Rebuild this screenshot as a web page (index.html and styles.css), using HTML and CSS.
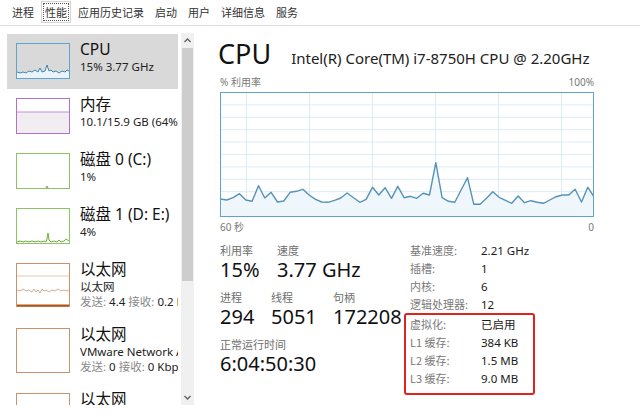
FILE: index.html
```html
<!DOCTYPE html>
<html lang="zh-CN">
<head>
<meta charset="utf-8">
<title>任务管理器 - 性能</title>
<link rel="stylesheet" href="styles.css">
</head>
<body>
<nav class="tabs">
  <span class="tab">进程</span>
  <span class="tab active"><span class="focus">性能</span></span>
  <span class="tab">应用历史记录</span>
  <span class="tab">启动</span>
  <span class="tab">用户</span>
  <span class="tab">详细信息</span>
  <span class="tab">服务</span>
</nav>
<div class="main">
  <aside class="side">
    <ul class="list">
      <li class="item selected">
        <svg class="thumb" width="54" height="36" viewBox="0 0 54 36">
          <polygon class="cpu-fill" points="1,29 4,30 7,29 10,30 13,28 16,29 19,27 22,29 24,25 26,29 29,28 31,22 33,28 35,27 37,29 40,28 43,30 46,28 49,29 51,27 53,28 53,35 1,35"/>
          <polyline class="cpu-line" points="1,29 4,30 7,29 10,30 13,28 16,29 19,27 22,29 24,25 26,29 29,28 31,22 33,28 35,27 37,29 40,28 43,30 46,28 49,29 51,27 53,28"/>
          <rect class="b-cpu" x="0.5" y="0.5" width="53" height="35"/>
        </svg>
        <div class="info">
          <div class="name">CPU</div>
          <div class="sub">15% 3.77 GHz</div>
        </div>
      </li>
      <li class="item">
        <svg class="thumb" width="54" height="36" viewBox="0 0 54 36">
          <rect class="mem-fill" x="1" y="14" width="52" height="21"/>
          <line class="mem-line" x1="1" y1="14" x2="53" y2="14"/>
          <rect class="b-mem" x="0.5" y="0.5" width="53" height="35"/>
        </svg>
        <div class="info">
          <div class="name">内存</div>
          <div class="sub">10.1/15.9 GB (64%)</div>
        </div>
      </li>
      <li class="item">
        <svg class="thumb" width="54" height="36" viewBox="0 0 54 36">
          <polyline class="disk-line" points="30,35 31,33 32,35"/>
          <rect class="b-disk" x="0.5" y="0.5" width="53" height="35"/>
        </svg>
        <div class="info">
          <div class="name">磁盘 0 (C:)</div>
          <div class="sub">1%</div>
        </div>
      </li>
      <li class="item">
        <svg class="thumb" width="54" height="36" viewBox="0 0 54 36">
          <polyline class="disk-line" points="1,34 4,33 7,34 10,33 13,34 16,33 19,34 22,33 25,34 28,33 30,34 31,31 32,25 33,32 35,34 38,33 41,34 43,32 45,34 48,33 50,31 53,33"/>
          <rect class="b-disk" x="0.5" y="0.5" width="53" height="35"/>
        </svg>
        <div class="info">
          <div class="name">磁盘 1 (D: E:)</div>
          <div class="sub">4%</div>
        </div>
      </li>
      <li class="item tall">
        <svg class="thumb" width="54" height="44" viewBox="0 0 54 44">
          <line class="eth-scale" x1="1" y1="13" x2="53" y2="13"/>
          <polyline class="eth-line" points="1,27 4,28 7,26 10,28 13,27 16,29 18,26 20,29 22,27 24,30 26,26 28,28 30,27 33,29 36,27 39,28 42,26 45,28 48,27 51,28 53,27"/>
          <rect class="b-eth" x="0.5" y="0.5" width="53" height="43"/>
          <line class="eth-base" x1="1" y1="42.5" x2="53" y2="42.5"/>
        </svg>
        <div class="info">
          <div class="name">以太网</div>
          <div class="sub">以太网</div>
          <div class="sub"><span class="k">发送:</span> 4.4 <span class="k">接收:</span> 0.2 Kbps</div>
        </div>
      </li>
      <li class="item tall">
        <svg class="thumb" width="54" height="45" viewBox="0 0 54 45">
          <rect class="b-eth" x="0.5" y="0.5" width="53" height="44"/>
        </svg>
        <div class="info">
          <div class="name">以太网</div>
          <div class="sub">VMware Network Adapter VMnet1</div>
          <div class="sub"><span class="k">发送:</span> 0 <span class="k">接收:</span> 0 Kbps</div>
        </div>
      </li>
      <li class="item tall">
        <svg class="thumb" width="54" height="45" viewBox="0 0 54 45">
          <rect class="b-eth" x="0.5" y="0.5" width="53" height="44"/>
        </svg>
        <div class="info">
          <div class="name">以太网</div>
          <div class="sub">VMware Network Adapter VMnet8</div>
          <div class="sub"><span class="k">发送:</span> 0 <span class="k">接收:</span> 0 Kbps</div>
        </div>
      </li>
    </ul>
    <div class="scrollbar">
      <svg class="arrow" width="13" height="14" viewBox="0 0 13 14"><polyline points="3.5,9 6.5,6 9.5,9"/></svg>
      <div class="thumb-bar"></div>
      <div class="track"></div>
      <svg class="arrow" width="13" height="14" viewBox="0 0 13 14"><polyline points="3.5,5 6.5,8 9.5,5"/></svg>
    </div>
  </aside>

  <section class="detail">
    <header class="head">
      <h1 class="title">CPU</h1>
      <span class="model">Intel(R) Core(TM) i7-8750H CPU @ 2.20GHz</span>
    </header>
    <div class="axis top"><span>% 利用率</span><span>100%</span></div>
    <svg class="chart" width="374" height="125" viewBox="0 0 374 125">
      <g class="grid">
        <line x1="26.5" y1="0" x2="26.5" y2="125"/>
        <line x1="89.5" y1="0" x2="89.5" y2="125"/>
        <line x1="152.5" y1="0" x2="152.5" y2="125"/>
        <line x1="215.5" y1="0" x2="215.5" y2="125"/>
        <line x1="278.5" y1="0" x2="278.5" y2="125"/>
        <line x1="341.5" y1="0" x2="341.5" y2="125"/>
        <line x1="0" y1="12.9" x2="374" y2="12.9"/>
        <line x1="0" y1="25.3" x2="374" y2="25.3"/>
        <line x1="0" y1="37.7" x2="374" y2="37.7"/>
        <line x1="0" y1="50.1" x2="374" y2="50.1"/>
        <line x1="0" y1="62.5" x2="374" y2="62.5"/>
        <line x1="0" y1="74.9" x2="374" y2="74.9"/>
        <line x1="0" y1="87.3" x2="374" y2="87.3"/>
        <line x1="0" y1="99.7" x2="374" y2="99.7"/>
        <line x1="0" y1="112.1" x2="374" y2="112.1"/>
      </g>
      <polygon class="usage-fill" points="0.5,107 6.8,108 13.1,105.7 19.5,101.7 25.8,108 32.1,109.3 38.5,93.7 44.8,106 51.1,100.3 57.5,110 63.8,109 70.1,100.3 76.5,99.3 82.8,97.3 89.1,103 95.5,107.3 101.8,110 108.1,110.3 114.5,108.3 120.8,106 127.1,101 133.5,105.7 139.8,110.3 146.1,107.3 152.5,95.3 158.8,103 165.1,95.7 171.5,106.3 177.8,94.3 184.1,105.7 190.5,104.3 196.8,106.3 203.1,101.3 209.5,103 215.8,70.7 222.1,105.7 228.5,109.3 234.8,110.3 241.1,98 247.5,85.7 253.8,112.3 260.1,112.3 266.5,106.3 272.8,99.7 279.1,105.3 285.5,108.3 291.8,111.3 298.1,104 304.5,110.7 310.8,108.7 317.1,110.3 323.5,111.3 329.8,108 336.1,104.7 342.5,103 348.8,103 355.1,97.3 361.5,110 367.8,95.3 373.5,104 373.5,124.5 0.5,124.5"/>
      <polyline class="usage-line" points="0.5,107 6.8,108 13.1,105.7 19.5,101.7 25.8,108 32.1,109.3 38.5,93.7 44.8,106 51.1,100.3 57.5,110 63.8,109 70.1,100.3 76.5,99.3 82.8,97.3 89.1,103 95.5,107.3 101.8,110 108.1,110.3 114.5,108.3 120.8,106 127.1,101 133.5,105.7 139.8,110.3 146.1,107.3 152.5,95.3 158.8,103 165.1,95.7 171.5,106.3 177.8,94.3 184.1,105.7 190.5,104.3 196.8,106.3 203.1,101.3 209.5,103 215.8,70.7 222.1,105.7 228.5,109.3 234.8,110.3 241.1,98 247.5,85.7 253.8,112.3 260.1,112.3 266.5,106.3 272.8,99.7 279.1,105.3 285.5,108.3 291.8,111.3 298.1,104 304.5,110.7 310.8,108.7 317.1,110.3 323.5,111.3 329.8,108 336.1,104.7 342.5,103 348.8,103 355.1,97.3 361.5,110 367.8,95.3 373.5,104"/>
      <rect class="frame" x="0.5" y="0.5" width="373" height="124"/>
    </svg>
    <div class="axis bottom"><span>60 秒</span><span>0</span></div>

    <div class="stats">
      <div class="live">
        <div class="row">
          <div class="stat w57"><div class="label">利用率</div><div class="value">15%</div></div>
          <div class="stat"><div class="label">速度</div><div class="value">3.77 GHz</div></div>
        </div>
        <div class="row">
          <div class="stat w51"><div class="label">进程</div><div class="value">294</div></div>
          <div class="stat w62"><div class="label">线程</div><div class="value">5051</div></div>
          <div class="stat"><div class="label">句柄</div><div class="value">172208</div></div>
        </div>
        <div class="row">
          <div class="stat"><div class="label">正常运行时间</div><div class="value">6:04:50:30</div></div>
        </div>
      </div>
      <div class="specs">
        <dl class="spec-list">
          <dt>基准速度:</dt><dd>2.21 GHz</dd>
          <dt>插槽:</dt><dd>1</dd>
          <dt>内核:</dt><dd>6</dd>
          <dt>逻辑处理器:</dt><dd>12</dd>
        </dl>
        <dl class="spec-list boxed">
          <dt>虚拟化:</dt><dd>已启用</dd>
          <dt>L1 缓存:</dt><dd>384 KB</dd>
          <dt>L2 缓存:</dt><dd>1.5 MB</dd>
          <dt>L3 缓存:</dt><dd>9.0 MB</dd>
        </dl>
      </div>
    </div>
  </section>
</div>
</body>
</html>
```

FILE: styles.css
```css
* { box-sizing: border-box; }

html, body {
  margin: 0;
  padding: 0;
  background: #ffffff;
}

body {
  width: 640px;
  height: 417px;
  overflow: hidden;
  font-family: "Segoe UI", "Noto Sans", "Noto Sans CJK SC", sans-serif;
  color: #1a1a1a;
}

/* ---------- tabs ---------- */
.tabs {
  display: flex;
  align-items: stretch;
  gap: 3px;
  height: 26px;
  padding: 1px 0 0 8px;
  border-bottom: 1px solid #dadada;
  font-family: "Noto Sans CJK SC", sans-serif;
  font-size: 11px;
  color: #333;
}

.tab {
  display: flex;
  align-items: center;
  height: 22px;
  padding: 0 3px;
  border: 1px solid transparent;
}

.tab.active {
  background: #fff;
  border-color: #d6d6d6;
  padding: 1px;
}

.tab .focus {
  display: flex;
  align-items: center;
  height: 100%;
  padding: 0 1px;
  border: 1px dotted #555;
}

/* ---------- sidebar ---------- */
.main {
  display: flex;
  align-items: flex-start;
  height: 391px;
}

.side {
  display: flex;
  width: 195px;
  height: 379px;
  flex: none;
  overflow: hidden;
}

.list {
  list-style: none;
  margin: 0;
  padding: 8px 0 0 7px;
  width: 181px;
}

.item {
  display: flex;
  width: 171px;
  padding: 9px 0 10px 9px;
  overflow: hidden;
  white-space: nowrap;
}

.item.selected {
  background: #d9d9d9;
}

.thumb {
  flex: none;
  margin-right: 10px;
  display: block;
}

.info {
  margin-top: -5px;
  min-width: 0;
  overflow: hidden;
}

.name {
  font-size: 15.5px;
  line-height: 22px;
  color: #111;
}

.sub {
  font-size: 11.5px;
  line-height: 14.5px;
  color: #222;
}

.sub .k { color: #8a8a8a; }

.b-cpu, .b-mem, .b-disk, .b-eth { fill: none; stroke-width: 1; }
.b-cpu { stroke: #5ea6cf; }
.b-mem { stroke: #b56fcf; }
.b-disk { stroke: #8bc463; }
.b-eth { stroke: #c8936a; }

.cpu-fill { fill: #e9f3f9; }
.cpu-line { fill: none; stroke: #3f88b6; stroke-width: 1; }
.mem-fill { fill: #f1eef2; }
.mem-line { stroke: #c48ed8; stroke-width: 1; }
.disk-line { fill: none; stroke: #6fae3d; stroke-width: 1; }
.eth-scale { stroke: #e4c8b0; stroke-width: 1; }
.eth-line { fill: none; stroke: #c79b7d; stroke-width: 0.8; }
.eth-base { stroke: #b0561a; stroke-width: 2; }

.scrollbar {
  display: flex;
  flex-direction: column;
  width: 13px;
  margin-top: 7px;
  height: 372px;
  background: #f0f0f0;
}

.arrow {
  display: block;
  flex: none;
}

.arrow polyline {
  fill: none;
  stroke: #606060;
  stroke-width: 1.3;
}

.thumb-bar {
  height: 233px;
  margin: 1px 1px 0;
  background: #cdcdcd;
  flex: none;
}

.track { flex: 1; }

/* ---------- detail ---------- */
.detail {
  flex: 1;
  padding-left: 25px;
}

.head {
  display: flex;
  align-items: baseline;
  gap: 20px;
  height: 46px;
  padding-top: 10px;
}

.title {
  margin: 0 0 0 -2px;
  font-weight: 400;
  font-size: 27px;
  line-height: 36px;
  color: #111;
}

.model {
  font-size: 15px;
  color: #222;
}

.axis {
  display: flex;
  justify-content: space-between;
  width: 374px;
  font-size: 10px;
  color: #7a7a7a;
  font-family: "Noto Sans", "Noto Sans CJK SC", sans-serif;
}

.axis.top {
  height: 20px;
  line-height: 14px;
  padding-top: 3px;
}

.axis.bottom {
  height: 24px;
  line-height: 14px;
  padding-top: 3px;
}

.chart { display: block; }

.grid line { stroke: #dcebf4; stroke-width: 1; }
.usage-fill { fill: #f0f7fc; }
.usage-line { fill: none; stroke: #5592b8; stroke-width: 1.4; stroke-linejoin: round; }
.frame { fill: none; stroke: #5fa3c6; stroke-width: 1; }

.stats {
  display: flex;
}

.live {
  width: 184px;
  padding-top: 1px;
}

.row {
  display: flex;
  height: 47px;
}

.stat.w57 { width: 57px; }
.stat.w51 { width: 51px; }
.stat.w62 { width: 62px; }

.label {
  font-family: "Noto Sans CJK SC", sans-serif;
  font-size: 11px;
  line-height: 16px;
  color: #6e6e6e;
}

.value {
  font-size: 20px;
  line-height: 24px;
  color: #111;
  white-space: nowrap;
}

.spec-list {
  display: grid;
  grid-template-columns: 71px auto;
  grid-auto-rows: 18px;
  align-items: center;
  margin: 0;
  font-size: 11.5px;
  padding-left: 6px;
}

.spec-list dt {
  color: #7a7a7a;
  font-family: "Noto Sans CJK SC", sans-serif;
  font-size: 11px;
}

.spec-list dd {
  margin: 0;
  color: #1a1a1a;
}

.spec-list.boxed {
  width: 131px;
  padding: 0 0 6px 4px;
  border: 2px solid #e0231f;
  border-radius: 3px;
}
```
